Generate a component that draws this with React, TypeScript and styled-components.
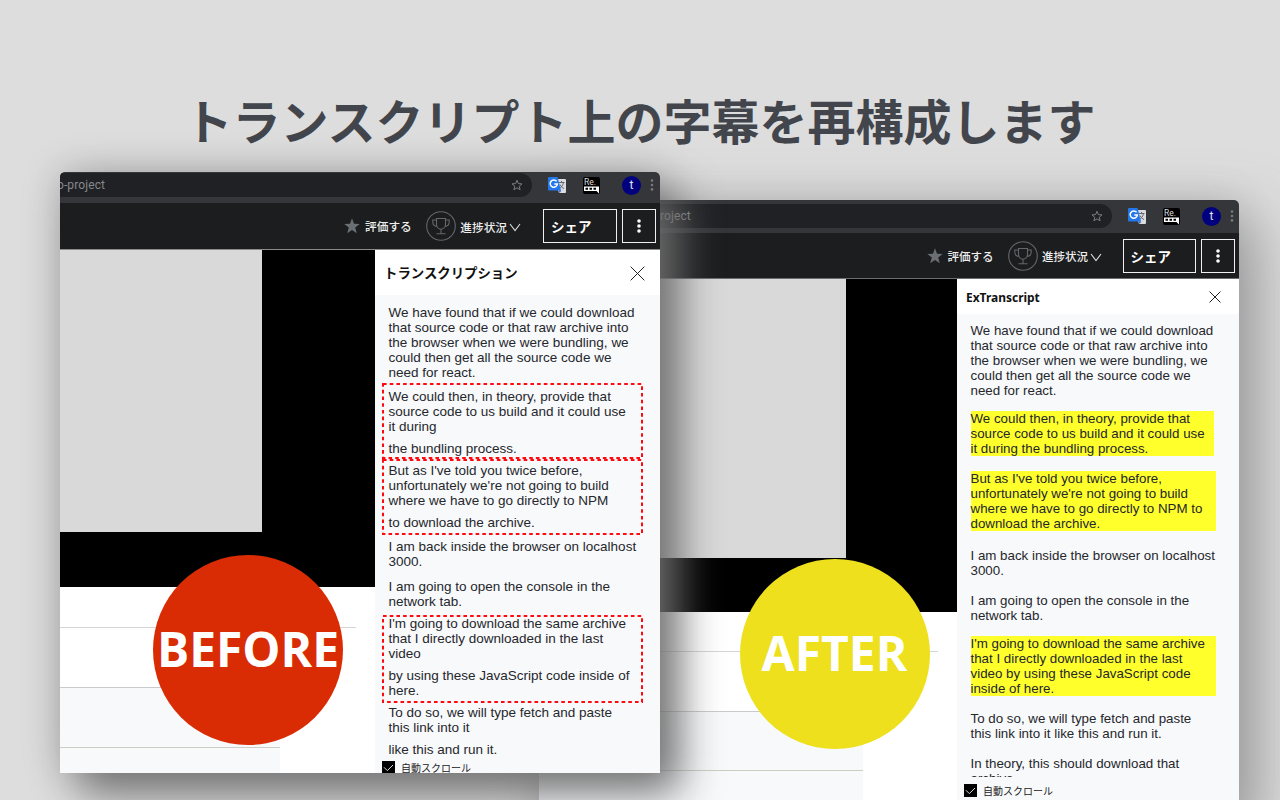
import React from "react";
import styled, { createGlobalStyle } from "styled-components";

const GlobalStyle = createGlobalStyle`
  * { box-sizing: border-box; }
  body { margin: 0; background: #ddd; }
`;

const JP = `"Noto Sans CJK JP", sans-serif`;

const Stage = styled.main`
  position: relative;
  width: 1280px;
  height: 800px;
  overflow: hidden;
  background: #dddddd;
`;

const Title = styled.h1`
  margin: 0;
  padding: 83px 0 0 0;
  text-align: center;
  font: 700 48px/72px ${JP};
  color: #42464c;
  white-space: nowrap;
`;

const Win = styled.section<{ $x: number; $y: number; $w: number; $h: number; $shadow: string }>`
  position: absolute;
  left: ${(p) => p.$x}px;
  top: ${(p) => p.$y}px;
  width: ${(p) => p.$w}px;
  height: ${(p) => p.$h}px;
  border-radius: 5px 5px 0 0;
  box-shadow: ${(p) => p.$shadow};
`;

const WinBody = styled.div`
  display: flex;
  flex-direction: column;
  height: 100%;
  overflow: hidden;
  border-radius: 5px 5px 0 0;
  background: #fff;
`;

const BrowserBar = styled.div<{ $h: number; $pt: number }>`
  display: flex;
  flex: none;
  align-items: flex-start;
  height: ${(p) => p.$h}px;
  padding-top: ${(p) => p.$pt}px;
  background: #35363a;
`;

const Address = styled.div<{ $w: number; $indent: number }>`
  display: flex;
  align-items: center;
  justify-content: space-between;
  width: ${(p) => p.$w}px;
  height: 24px;
  padding-right: 9px;
  border-radius: 0 12px 12px 0;
  background: #202124;
  color: #85888c;
  font: 12px/24px Roboto, sans-serif;
  letter-spacing: 0.1px;
  overflow: hidden;
  & > span { margin-left: ${(p) => p.$indent}px; white-space: nowrap; }
`;

const Extensions = styled.div`
  display: flex;
  align-items: center;
  height: 24px;
  padding-left: 16px;
`;

const Avatar = styled.span`
  width: 19px;
  height: 19px;
  margin: 1px 9px 0 22px;
  border-radius: 50%;
  background: #00007f;
  color: #e4e4ee;
  font: 12px/18px Roboto, sans-serif;
  text-align: center;
`;

const Recap = styled.span`
  position: relative;
  width: 17px;
  height: 17px;
  margin-left: 17px;
  border-radius: 2px;
  background: #000;
  svg { display: block; }
`;

const RecapText = styled.span`
  position: absolute;
  left: 1px;
  top: 0;
  color: #ddd;
  font: 8.5px/11px Roboto, sans-serif;
`;

const AppBar = styled.div<{ $h: number; $pl: number; $size: number; $line: string }>`
  display: flex;
  flex: none;
  align-items: center;
  height: ${(p) => p.$h}px;
  padding-left: ${(p) => p.$pl}px;
  border-bottom: 1px solid ${(p) => p.$line};
  background: #1c1d1f;
  color: #eee;
  font: 500 ${(p) => p.$size}px/20px ${JP};
  white-space: nowrap;
  svg { flex: none; }
`;

const Rate = styled.span`
  margin: 0 14px 0 5px;
`;

const Progress = styled.span`
  margin: 1px 2px 0 4.5px;
`;

const OutlineButton = styled.span<{ $w: number; $ml: number }>`
  display: flex;
  flex: none;
  align-items: center;
  width: ${(p) => p.$w}px;
  height: 34px;
  margin-left: ${(p) => p.$ml}px;
  padding-left: 7px;
  border: 1px solid #f0f0f0;
  color: #fff;
  font: 700 13.5px/20px ${JP};
`;

const KebabButton = styled(OutlineButton)`
  justify-content: center;
  padding: 0;
`;

const Content = styled.div`
  display: flex;
  flex: 1;
  min-height: 0;
`;

const Course = styled.div<{ $w: number }>`
  flex: none;
  width: ${(p) => p.$w}px;
  background: #fff;
`;

const Player = styled.div<{ $h: number }>`
  height: ${(p) => p.$h}px;
  background: #000;
`;

const Video = styled.div<{ $w: number; $h: number }>`
  width: ${(p) => p.$w}px;
  height: ${(p) => p.$h}px;
  background: #d9d9d9;
`;

const Row = styled.div<{ $w: number; $h: number; $fill?: boolean; $line?: string }>`
  width: ${(p) => p.$w}px;
  height: ${(p) => p.$h}px;
  background: ${(p) => (p.$fill ? "#f7f9fb" : "#fff")};
  border-bottom: 1px solid ${(p) => p.$line ?? "transparent"};
`;

const Panel = styled.aside`
  display: flex;
  flex: 1;
  flex-direction: column;
  min-width: 0;
  background: #f8f9fb;
`;

const PanelHeader = styled.header<{ $h: number; $pad: string }>`
  display: flex;
  flex: none;
  align-items: center;
  justify-content: space-between;
  height: ${(p) => p.$h}px;
  padding: ${(p) => p.$pad};
  background: #fff;
  color: #111;
`;

const JpHeading = styled.h2`
  margin: -2px 0 0;
  font: 700 13.4px/20px ${JP};
`;

const EnHeading = styled.h2`
  margin: 0;
  font: 700 13px/20px "Noto Sans", sans-serif;
  transform: scaleX(0.92);
  transform-origin: left;
`;

const Transcript = styled.div<{ $h: number; $pt: number; $size: number }>`
  flex: none;
  height: ${(p) => p.$h}px;
  padding: ${(p) => p.$pt}px 0 0 13.5px;
  overflow: hidden;
  color: #25272b;
  font: ${(p) => p.$size}px/15px "Liberation Sans", sans-serif;
  white-space: nowrap;
`;

const Cue = styled.p<{ $mt: number; $mark?: number }>`
  width: ${(p) => (p.$mark ? `${p.$mark}px` : "auto")};
  margin: ${(p) => p.$mt}px 0 0;
  background: ${(p) => (p.$mark ? "#ffff2b" : "none")};
`;

const Group = styled.div`
  position: relative;
  display: flow-root;
`;

const Outline = styled.svg<{ $top: number }>`
  position: absolute;
  left: -6.5px;
  top: ${(p) => p.$top}px;
`;

const AutoScroll = styled.div<{ $pt: number }>`
  display: flex;
  align-items: flex-start;
  gap: 6px;
  padding: ${(p) => p.$pt}px 0 0 7px;
  color: #222;
  font: 400 10px/13px ${JP};
`;

const Badge = styled.div<{ $x: number; $y: number; $bg: string }>`
  position: absolute;
  left: ${(p) => p.$x}px;
  top: ${(p) => p.$y}px;
  display: flex;
  align-items: center;
  justify-content: center;
  width: 190px;
  height: 190px;
  padding-bottom: 2px;
  border-radius: 50%;
  background: ${(p) => p.$bg};
  color: #fff;
  font: 700 48px/60px "Open Sans", sans-serif;
`;

const BookmarkStar = () => (
  <svg width="12" height="12" viewBox="0 0 24 24" fill="none" stroke="#7b7d81" strokeWidth="2">
    <path d="M12 2.5l2.8 6.7 7.2.6-5.5 4.7 1.7 7L12 17.7l-6.200 3.800 1.700-7L2 9.800l7.200-.6z" />
  </svg>
);

const Translate = () => (
  <svg width="18" height="17" viewBox="0 0 18 17">
    <path d="M7 2h10a1 1 0 0 1 1 1v12a1 1 0 0 1-1 1h-6z" fill="#d9dbde" />
    <path d="M10.500 5.500h6M13.500 4v1.500M15.500 5.500c-.5 3-2.500 5-4 6M12 7.500c.8 2 2.500 3.500 4 4" stroke="#65696d" strokeWidth="1" fill="none" />
    <path d="M1 0h8.500l3.500 13.500H1a1 1 0 0 1-1-1V1a1 1 0 0 1 1-1z" fill="#2477e8" />
    <path d="M11 13.500h2.300L11.500 16z" fill="#1b56b8" />
    <path d="M8.600 4.300A3.600 3.600 0 1 0 9.400 7H6.300" stroke="#fff" strokeWidth="1.500" fill="none" />
  </svg>
);

const MenuDots = () => (
  <svg width="4" height="12" viewBox="0 0 4 12" fill="#77797d">
    <circle cx="2" cy="1.600" r="1.300" /><circle cx="2" cy="6" r="1.300" /><circle cx="2" cy="10.400" r="1.300" />
  </svg>
);

const RateStar = () => (
  <svg width="16" height="16" viewBox="0 0 16 16" fill="#6a6f73">
    <path d="M8 .3l2 5.500 5.700.1-4.500 3.600 1.600 5.700L8 11.900l-4.800 3.300 1.600-5.700L.3 5.900 6 5.800z" />
  </svg>
);

const Trophy = () => (
  <svg width="30" height="30" viewBox="0 0 30 30" fill="none" stroke="#63676b" strokeWidth="1.100">
    <circle cx="15" cy="15" r="14.300" />
    <path d="M10.500 7.500h9v5.500c0 3-2 5.200-4.500 5.200s-4.500-2.200-4.500-5.200zM10.500 9H6.800v2c0 2.500 1.700 4.300 4.300 4.500M19.500 9h3.700v2c0 2.500-1.700 4.300-4.300 4.500M15 18.200v4.500M10.500 22.800h9" />
  </svg>
);

const ChevronIcon = styled.svg`
  margin-top: 3px;
`;

const Chevron = () => (
  <ChevronIcon width="12" height="9" viewBox="0 0 12 9" fill="none" stroke="#ddd" strokeWidth="1.100">
    <path d="M1 1l5 6.700L11 1" />
  </ChevronIcon>
);

const Kebab = () => (
  <svg width="4" height="14" viewBox="0 0 4 14" fill="#fff">
    <circle cx="2" cy="2" r="1.800" /><circle cx="2" cy="7" r="1.800" /><circle cx="2" cy="12" r="1.800" />
  </svg>
);

const Close = ({ size }: { size: number }) => (
  <svg width={size} height={size} viewBox="0 0 16 16" fill="none" stroke="#222" strokeWidth={16 / size}>
    <path d="M.7.7l14.600 14.600M15.300.7L.7 15.300" />
  </svg>
);

const Check = () => (
  <svg width="13" height="13" viewBox="0 0 13 13">
    <rect width="13" height="13" fill="#000" />
    <path d="M2 6.300l3.300 3.300L11 4" fill="none" stroke="#ddd" strokeWidth="1" />
  </svg>
);

const DashedOutline = ({ top, height }: { top: number; height: number }) => (
  <Outline $top={top} width="261" height={height}>
    <rect x="1" y="1" width="259" height={height - 2} fill="none" stroke="#ff0a10" strokeWidth="2" strokeDasharray="3.600 3.100" />
  </Outline>
);

const Lines = ({ text }: { text: string[] }) => (
  <>
    {text.map((line) => (
      <React.Fragment key={line}>{line}<br /></React.Fragment>
    ))}
  </>
);

const Tools = () => (
  <Extensions>
    <Translate />
    <Recap>
      <RecapText>Re.</RecapText>
      <svg width="17" height="17" viewBox="0 0 17 17">
        <path d="M1 9.500h15v7l-2.500-2.500H1z" fill="#fff" />
        <path d="M2.500 10.800h2.500v2H2.500zM6.500 10.800H9v2H6.500zM10.500 10.800H13v2h-2.500z" fill="#000" />
      </svg>
    </Recap>
    <Avatar>t</Avatar>
    <MenuDots />
  </Extensions>
);

export default function App() {
  return (
    <Stage>
      <GlobalStyle />
      <Title>トランスクリプト上の字幕を再構成します</Title>

      <Win $x={539} $y={200} $w={700} $h={620} $shadow="20px 20px 60px rgba(105,105,105,.52), 0 0 40px rgba(0,0,0,.12)">
        <WinBody>
          <BrowserBar $h={33} $pt={4}>
            <Address $w={573} $indent={97}><span>go-project</span><BookmarkStar /></Address>
            <Tools />
          </BrowserBar>
          <AppBar $h={46} $pl={387.5} $size={11.5} $line="#6d6d70">
            <RateStar /><Rate>評価する</Rate>
            <Trophy /><Progress>進捗状況</Progress><Chevron />
            <OutlineButton $w={73} $ml={20.5}>シェア</OutlineButton>
            <KebabButton $w={34} $ml={5}><Kebab /></KebabButton>
          </AppBar>
          <Content>
            <Course $w={418}>
              <Player $h={333}><Video $w={307} $h={279} /></Player>
              <Row $w={399} $h={40} $line="#d4d5d7" />
              <Row $w={324} $h={60} $line="#c8cacc" />
              <Row $w={324} $h={59} $fill $line="#cfcdc3" />
              <Row $w={324} $h={40} $fill />
            </Course>
            <Panel>
              <PanelHeader $h={35} $pad="1px 18px 0 9px">
                <EnHeading>ExTranscript</EnHeading><Close size={12} />
              </PanelHeader>
              <Transcript $h={463} $pt={9} $size={13.33}>
                <Cue $mt={0}><Lines text={["We have found that if we could download", "that source code or that raw archive into", "the browser when we were bundling, we", "could then get all the source code we", "need for react."]} /></Cue>
                <Cue $mt={13} $mark={243.5}><Lines text={["We could then, in theory, provide that", "source code to us build and it could use", "it during the bundling process."]} /></Cue>
                <Cue $mt={15} $mark={245}><Lines text={["But as I've told you twice before,", "unfortunately we're not going to build", "where we have to go directly to NPM to", "download the archive."]} /></Cue>
                <Cue $mt={17}><Lines text={["I am back inside the browser on localhost", "3000."]} /></Cue>
                <Cue $mt={15}><Lines text={["I am going to open the console in the", "network tab."]} /></Cue>
                <Cue $mt={13} $mark={245}><Lines text={["I'm going to download the same archive", "that I directly downloaded in the last", "video by using these JavaScript code", "inside of here."]} /></Cue>
                <Cue $mt={15}><Lines text={["To do so, we will type fetch and paste", "this link into it like this and run it."]} /></Cue>
                <Cue $mt={15}><Lines text={["In theory, this should download that", "archive."]} /></Cue>
              </Transcript>
              <AutoScroll $pt={7}><Check />自動スクロール</AutoScroll>
            </Panel>
          </Content>
        </WinBody>
      </Win>

      <Win $x={60} $y={172} $w={600} $h={600.5} $shadow="20px 20px 40px rgba(112,112,112,.95), 0 0 40px rgba(0,0,0,.2)">
        <WinBody>
          <BrowserBar $h={31} $pt={1}>
            <Address $w={472} $indent={-3}><span>o-project</span><BookmarkStar /></Address>
            <Tools />
          </BrowserBar>
          <AppBar $h={47} $pl={284} $size={11.7} $line="#8b8c8e">
            <RateStar /><Rate>評価する</Rate>
            <Trophy /><Progress>進捗状況</Progress><Chevron />
            <OutlineButton $w={74} $ml={22}>シェア</OutlineButton>
            <KebabButton $w={34} $ml={5}><Kebab /></KebabButton>
          </AppBar>
          <Content>
            <Course $w={315}>
              <Player $h={337}><Video $w={202} $h={282} /></Player>
              <Row $w={296} $h={40.500} $line="#d4d5d7" />
              <Row $w={220} $h={60} $line="#c8cacc" />
              <Row $w={220} $h={60} $fill $line="#cfcdc3" />
              <Row $w={220} $h={30} $fill />
            </Course>
            <Panel>
              <PanelHeader $h={45} $pad="1px 15px 0 9px">
                <JpHeading>トランスクリプション</JpHeading><Close size={15} />
              </PanelHeader>
              <Transcript $h={458.5} $pt={10} $size={13.5}>
                <Cue $mt={0}><Lines text={["We have found that if we could download", "that source code or that raw archive into", "the browser when we were bundling, we", "could then get all the source code we", "need for react."]} /></Cue>
                <Group>
                  <DashedOutline top={3} height={76} />
                  <Cue $mt={8.5}><Lines text={["We could then, in theory, provide that", "source code to us build and it could use", "it during"]} /></Cue>
                  <Cue $mt={7}>the bundling process.</Cue>
                </Group>
                <Group>
                  <DashedOutline top={3} height={76} />
                  <Cue $mt={7}><Lines text={["But as I've told you twice before,", "unfortunately we're not going to build", "where we have to go directly to NPM"]} /></Cue>
                  <Cue $mt={7}>to download the archive.</Cue>
                </Group>
                <Cue $mt={9.5}><Lines text={["I am back inside the browser on localhost", "3000."]} /></Cue>
                <Cue $mt={9.5}><Lines text={["I am going to open the console in the", "network tab."]} /></Cue>
                <Group>
                  <DashedOutline top={6.5} height={88} />
                  <Cue $mt={7}><Lines text={["I'm going to download the same archive", "that I directly downloaded in the last", "video"]} /></Cue>
                  <Cue $mt={7}><Lines text={["by using these JavaScript code inside of", "here."]} /></Cue>
                </Group>
                <Cue $mt={7}><Lines text={["To do so, we will type fetch and paste", "this link into it"]} /></Cue>
                <Cue $mt={7}>like this and run it.</Cue>
              </Transcript>
              <AutoScroll $pt={7.5}><Check />自動スクロール</AutoScroll>
            </Panel>
          </Content>
        </WinBody>
      </Win>

      <Badge $x={153} $y={555} $bg="#d92c04">BEFORE</Badge>
      <Badge $x={739.5} $y={559} $bg="#eee01c">AFTER</Badge>
    </Stage>
  );
}
